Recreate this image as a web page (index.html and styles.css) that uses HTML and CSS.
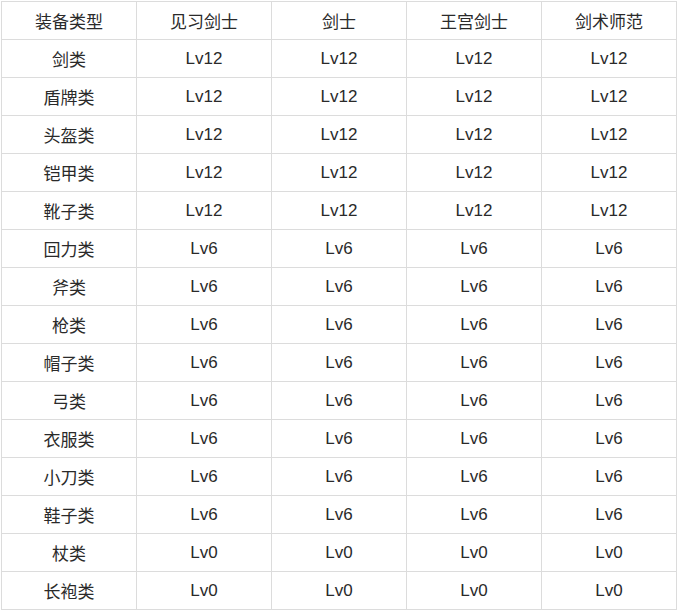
FILE: index.html
```html
<!DOCTYPE html>
<html lang="zh">
<head>
<meta charset="utf-8">
<link rel="stylesheet" href="styles.css">
</head>
<body>
<table class="equip">
  <thead>
    <tr><th>装备类型</th><th>见习剑士</th><th>剑士</th><th>王宫剑士</th><th>剑术师范</th></tr>
  </thead>
  <tbody>
    <tr><td>剑类</td><td>Lv12</td><td>Lv12</td><td>Lv12</td><td>Lv12</td></tr>
    <tr><td>盾牌类</td><td>Lv12</td><td>Lv12</td><td>Lv12</td><td>Lv12</td></tr>
    <tr><td>头盔类</td><td>Lv12</td><td>Lv12</td><td>Lv12</td><td>Lv12</td></tr>
    <tr><td>铠甲类</td><td>Lv12</td><td>Lv12</td><td>Lv12</td><td>Lv12</td></tr>
    <tr><td>靴子类</td><td>Lv12</td><td>Lv12</td><td>Lv12</td><td>Lv12</td></tr>
    <tr><td>回力类</td><td>Lv6</td><td>Lv6</td><td>Lv6</td><td>Lv6</td></tr>
    <tr><td>斧类</td><td>Lv6</td><td>Lv6</td><td>Lv6</td><td>Lv6</td></tr>
    <tr><td>枪类</td><td>Lv6</td><td>Lv6</td><td>Lv6</td><td>Lv6</td></tr>
    <tr><td>帽子类</td><td>Lv6</td><td>Lv6</td><td>Lv6</td><td>Lv6</td></tr>
    <tr><td>弓类</td><td>Lv6</td><td>Lv6</td><td>Lv6</td><td>Lv6</td></tr>
    <tr><td>衣服类</td><td>Lv6</td><td>Lv6</td><td>Lv6</td><td>Lv6</td></tr>
    <tr><td>小刀类</td><td>Lv6</td><td>Lv6</td><td>Lv6</td><td>Lv6</td></tr>
    <tr><td>鞋子类</td><td>Lv6</td><td>Lv6</td><td>Lv6</td><td>Lv6</td></tr>
    <tr><td>杖类</td><td>Lv0</td><td>Lv0</td><td>Lv0</td><td>Lv0</td></tr>
    <tr><td>长袍类</td><td>Lv0</td><td>Lv0</td><td>Lv0</td><td>Lv0</td></tr>
  </tbody>
</table>
</body>
</html>
```
FILE: styles.css
```css
html, body {
  margin: 0;
  padding: 0;
  background: #ffffff;
}
body {
  padding: 1px 0 0 1px;
}
.equip {
  border-collapse: collapse;
  table-layout: fixed;
  width: 676px;
  font-family: "Liberation Sans", "Noto Sans CJK SC", sans-serif;
  font-size: 17px;
  color: #2a2a2a;
}
.equip th,
.equip td {
  border: 1px solid #dcdcdc;
  height: 38px;
  padding: 0;
  text-align: center;
  vertical-align: middle;
  font-weight: normal;
  box-sizing: border-box;
}
```
